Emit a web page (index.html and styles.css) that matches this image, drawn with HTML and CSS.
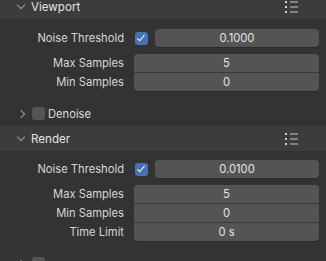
FILE: index.html
```html
<!DOCTYPE html>
<html lang="en">
<head>
    <meta charset="UTF-8">
    <meta name="viewport" content="width=device-width, initial-scale=1.0">
    <title>Sampling</title>
    <link rel="stylesheet" href="styles.css">
</head>
<body>
    <div class="page">
        <div class="panel">
            <div class="panel-head">
                <span class="chev down"></span>
                <span class="title">Viewport</span>
                <svg class="presets" width="14" height="12" viewBox="0 0 14 12">
                    <rect x="0" y="0" width="2" height="2" fill="#d4d4d4"/>
                    <rect x="0" y="5" width="2" height="2" fill="#d4d4d4"/>
                    <rect x="0" y="10" width="2" height="2" fill="#d4d4d4"/>
                    <rect x="5" y="0.5" width="8" height="1" fill="#c8c8c8"/>
                    <rect x="5" y="5.5" width="8" height="1" fill="#c8c8c8"/>
                    <rect x="5" y="10.5" width="8" height="1" fill="#c8c8c8"/>
                </svg>
            </div>
            <div class="panel-body">
                <div class="prop">
                    <span class="label">Noise Threshold</span>
                    <div class="ctl">
                        <span class="check on"></span>
                        <div class="field single">0.1000</div>
                    </div>
                </div>
                <div class="group">
                    <div class="prop">
                        <span class="label">Max Samples</span>
                        <div class="field">5</div>
                    </div>
                    <div class="prop">
                        <span class="label">Min Samples</span>
                        <div class="field">0</div>
                    </div>
                </div>
                <div class="sub-head">
                    <span class="chev right"></span>
                    <span class="check"></span>
                    <span class="title">Denoise</span>
                </div>
            </div>
        </div>

        <div class="panel">
            <div class="panel-head">
                <span class="chev down"></span>
                <span class="title">Render</span>
                <svg class="presets" width="14" height="12" viewBox="0 0 14 12">
                    <rect x="0" y="0" width="2" height="2" fill="#d4d4d4"/>
                    <rect x="0" y="5" width="2" height="2" fill="#d4d4d4"/>
                    <rect x="0" y="10" width="2" height="2" fill="#d4d4d4"/>
                    <rect x="5" y="0.5" width="8" height="1" fill="#c8c8c8"/>
                    <rect x="5" y="5.5" width="8" height="1" fill="#c8c8c8"/>
                    <rect x="5" y="10.5" width="8" height="1" fill="#c8c8c8"/>
                </svg>
            </div>
            <div class="panel-body">
                <div class="prop">
                    <span class="label">Noise Threshold</span>
                    <div class="ctl">
                        <span class="check on"></span>
                        <div class="field single">0.0100</div>
                    </div>
                </div>
                <div class="group">
                    <div class="prop">
                        <span class="label">Max Samples</span>
                        <div class="field">5</div>
                    </div>
                    <div class="prop">
                        <span class="label">Min Samples</span>
                        <div class="field">0</div>
                    </div>
                    <div class="prop">
                        <span class="label">Time Limit</span>
                        <div class="field">0 s</div>
                    </div>
                </div>
                <div class="sub-head">
                    <span class="chev right"></span>
                    <span class="check"></span>
                </div>
            </div>
        </div>
    </div>
</body>
</html>
```

FILE: styles.css
```css
html, body {
    margin: 0;
    padding: 0;
    background: #333333;
    overflow: hidden;
}
body {
    font-family: "Inter", "DejaVu Sans", sans-serif;
    font-size: 11.2px;
    color: #d8d8d8;
}
.page {
    width: 326px;
    margin-top: -6px;
}
.panel-head {
    display: flex;
    align-items: center;
    height: 25px;
    background: #3c3c3c;
    padding-left: 16px;
    box-sizing: border-box;
}
.panel-head .title {
    margin-left: 7px;
    color: #e2e2e2;
    font-size: 11.6px;
}
.presets {
    margin-left: auto;
    margin-right: 27px;
}
.chev {
    display: inline-block;
    width: 5px;
    height: 5px;
    border-right: 1.3px solid #9a9a9a;
    border-bottom: 1.3px solid #9a9a9a;
}
.chev.down {
    transform: translateY(-2px) rotate(45deg);
    margin-left: 2px;
}
.chev.right {
    transform: rotate(-45deg);
}
.panel-body {
    padding-top: 10px;
}
.panel + .panel .panel-body {
    padding-top: 9px;
}
.prop {
    display: grid;
    grid-template-columns: 124px 185px;
    column-gap: 10px;
    align-items: center;
}
.label {
    text-align: right;
    color: #d6d6d6;
    white-space: nowrap;
}
.ctl {
    display: flex;
    align-items: center;
}
.check {
    width: 13px;
    height: 13px;
    border-radius: 3px;
    background: #545454;
    box-sizing: border-box;
    position: relative;
    flex: none;
}
.check.on {
    background: #4772b3;
    margin-left: 1px;
    margin-right: 7px;
}
.check.on::after {
    content: "";
    position: absolute;
    left: 4px;
    top: 1.5px;
    width: 3px;
    height: 6.5px;
    border-right: 1.6px solid #ffffff;
    border-bottom: 1.6px solid #ffffff;
    transform: rotate(40deg);
}
.field {
    height: 18px;
    line-height: 18px;
    background: #545454;
    color: #e4e4e4;
    text-align: center;
}
.field.single {
    flex: 1;
    border-radius: 4px;
    box-shadow: 0 1px 0 #2a2a2a;
}
.group {
    margin-top: 7px;
}
.group .prop + .prop .field {
    border-top: 1px solid #3a3a3a;
}
.group .prop:first-child .field {
    border-radius: 4px 4px 0 0;
}
.group .prop:last-child .field {
    border-radius: 0 0 4px 4px;
    box-shadow: 0 1px 0 #2a2a2a;
}
.sub-head {
    display: flex;
    align-items: center;
    height: 25px;
    margin-top: 10px;
    padding-left: 18px;
}
.sub-head .check {
    margin-left: 8px;
}
.sub-head .title {
    margin-left: 3px;
    color: #dcdcdc;
}
```
